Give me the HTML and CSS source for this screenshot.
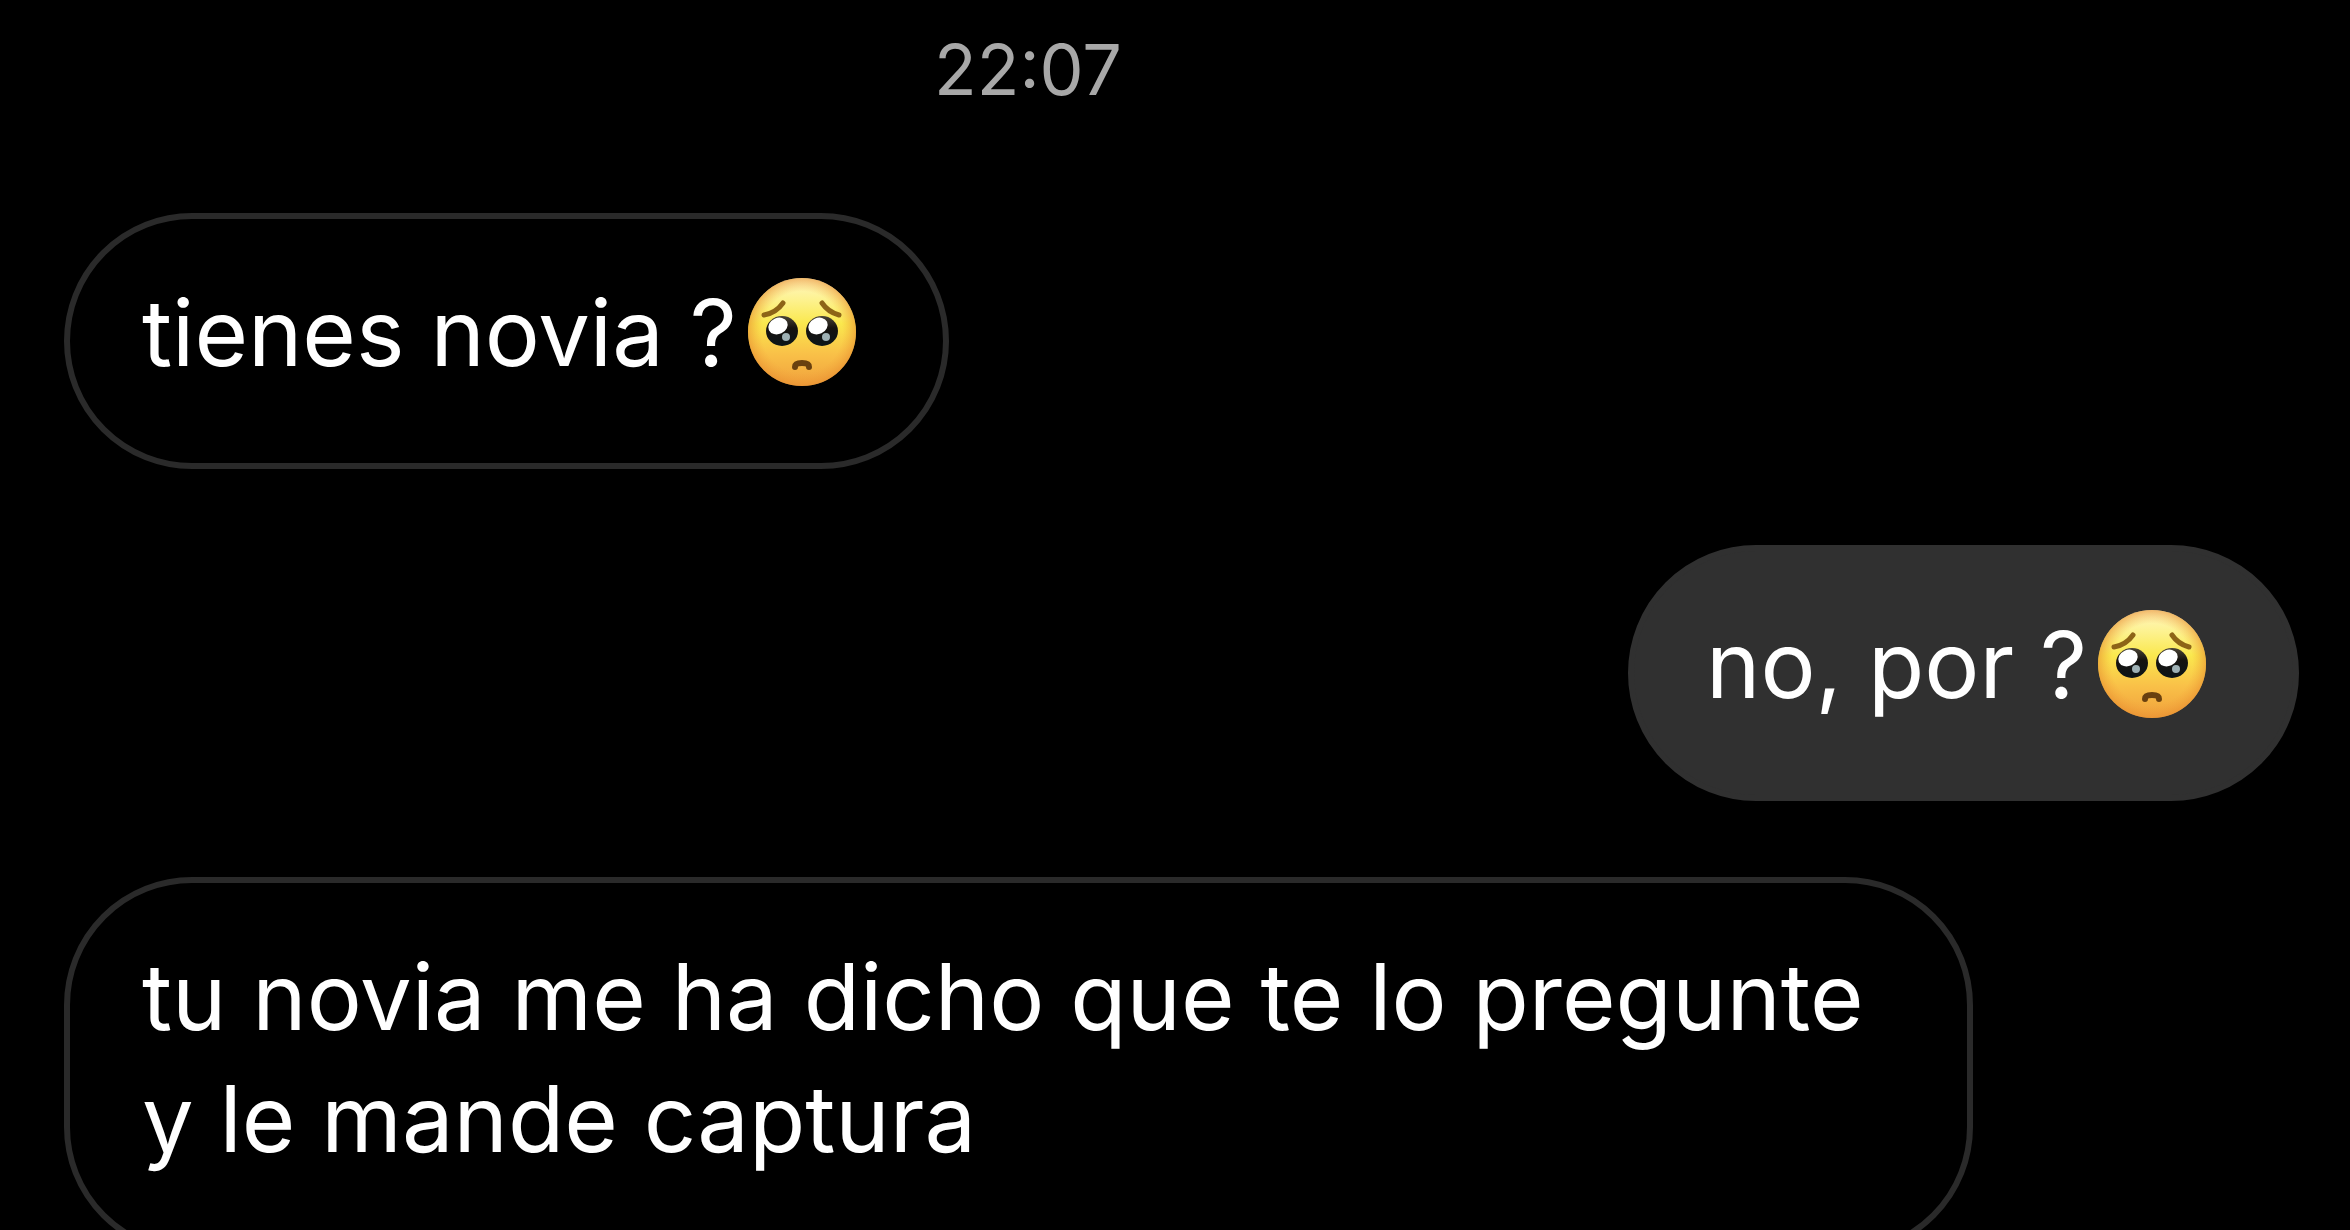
FILE: index.html
```html
<!DOCTYPE html>
<html lang="es">
<head>
<meta charset="utf-8">
<meta name="viewport" content="width=device-width, initial-scale=1">
<title>Chat</title>
<link rel="stylesheet" href="styles.css">
</head>
<body>
<svg class="defs" aria-hidden="true">
  <defs>
    <linearGradient id="skin" x1="0" y1="0" x2="0" y2="1">
      <stop offset="0" stop-color="#fff6c4"/>
      <stop offset=".2" stop-color="#fdf290"/>
      <stop offset=".42" stop-color="#fae84e"/>
      <stop offset=".7" stop-color="#f9c148"/>
      <stop offset="1" stop-color="#f0a03c"/>
    </linearGradient>
    <radialGradient id="rim">
      <stop offset=".75" stop-color="#f2a23a" stop-opacity="0"/>
      <stop offset="1" stop-color="#e88f30" stop-opacity=".6"/>
    </radialGradient>
    <linearGradient id="eye" x1="0" y1="0" x2="0" y2="1">
      <stop offset="0" stop-color="#4a4436"/>
      <stop offset=".4" stop-color="#16130f"/>
      <stop offset="1" stop-color="#0c1518"/>
    </linearGradient>
    <symbol id="pleading" viewBox="0 0 110 110">
      <circle cx="55" cy="55" r="54" fill="url(#skin)"/>
      <circle cx="55" cy="55" r="54" fill="url(#rim)"/>
      <path d="M17 38Q29 36 36 26M75 26Q81 35 92 38" fill="none" stroke="#8d6417" stroke-width="5" stroke-linecap="round"/>
      <ellipse cx="35" cy="54" rx="16" ry="15" fill="url(#eye)"/>
      <ellipse cx="75" cy="54" rx="16" ry="15" fill="url(#eye)"/>
      <ellipse cx="31" cy="49" rx="10" ry="8" fill="#fff" transform="rotate(-25 31 49)"/>
      <ellipse cx="71" cy="49" rx="10" ry="8" fill="#fff" transform="rotate(-25 71 49)"/>
      <ellipse cx="39" cy="60" rx="4" ry="4" fill="#9db0b4"/>
      <ellipse cx="79" cy="60" rx="4" ry="4" fill="#9db0b4"/>
      <path d="M48 90Q48 86 55 86T62 90" fill="none" stroke="#69400f" stroke-width="6" stroke-linecap="round"/>
    </symbol>
  </defs>
</svg>
<main class="thread">
  <time class="stamp" datetime="22:07">22:07</time>
  <p class="bubble received">tienes novia ?<svg class="emoji" role="img" aria-label="🥺"><use href="#pleading"/></svg></p>
  <p class="bubble sent">no, por ?<svg class="emoji" role="img" aria-label="🥺"><use href="#pleading"/></svg></p>
  <p class="bubble received">tu novia me ha dicho que te lo pregunte y le mande captura</p>
</main>
</body>
</html>
```
FILE: styles.css
```css
* {
  box-sizing: border-box;
}

body {
  margin: 0;
  background: #000;
  color: #fff;
  font-family: Inter, "Liberation Sans", sans-serif;
}

.defs {
  position: absolute;
  width: 0;
  height: 0;
}

.thread {
  display: flex;
  flex-direction: column;
  gap: 76px;
  height: 100vh;
  padding: 28px 51px 28px 64px;
  overflow: hidden auto;
  scrollbar-width: none;
}

.thread > * {
  flex: none;
}

.stamp {
  margin: 0 307px 25px 0;
  color: #a8a8a8;
  font-size: 70px;
  line-height: 84px;
  text-align: center;
}

.bubble {
  max-width: min(1909px, 100%);
  margin: 0;
  padding: 53px 72px 69px;
  border: 6px solid #2a2a2a;
  border-radius: 128px;
  font-size: 92px;
  line-height: 122px;
}

.received {
  align-self: flex-start;
}

.sent {
  align-self: flex-end;
  border-color: #303030;
  background: #303030;
}

.emoji {
  width: 110px;
  height: 110px;
  margin: 0 14px 0 10px;
  vertical-align: -21px;
}
```
